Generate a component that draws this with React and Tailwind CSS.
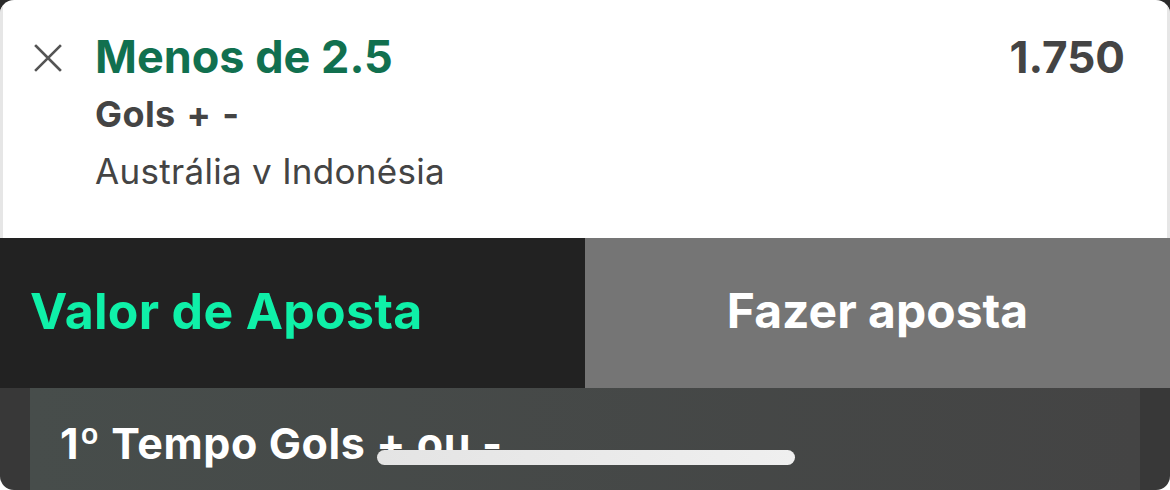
export default function App() {
  return (
    <div className="h-[490px] w-[1170px] overflow-hidden bg-[linear-gradient(to_bottom,#2a2a2a_50%,#ffffff_50%)] font-['Inter','Liberation_Sans',sans-serif]">
      <div className="flex h-full flex-col overflow-hidden rounded-[14px]">
        {/* selection */}
        <div className="flex h-[238px] shrink-0 items-start border-x-[3px] border-[#e6e6e6] bg-white pl-[31px] pr-[42px] pt-[32px]">
          <button className="mt-[12px] flex h-[28px] w-[28px] shrink-0 items-center justify-center text-[#555]">
            <svg viewBox="0 0 28 28" className="h-[28px] w-[28px]" fill="none" stroke="currentColor" strokeWidth="2.6" strokeLinecap="square">
              <path d="M2 2 L26 26 M26 2 L2 26" />
            </svg>
          </button>
          <div className="ml-[33px] flex flex-1 flex-col">
            <div className="text-[45px] font-bold leading-[50px] text-[#11704f]">Menos de 2.5</div>
            <div className="mt-[12px] text-[36px] font-bold leading-[40px] tracking-[0.4px] text-[#444] [word-spacing:2px]">Gols + -</div>
            <div className="mt-[17px] text-[35px] leading-[40px] tracking-[0.3px] text-[#444]">Austrália v Indonésia</div>
          </div>
          <div className="text-[44px] font-bold leading-[50px] text-[#444]">1.750</div>
        </div>

        {/* actions */}
        <div className="flex h-[150px] shrink-0">
          <button className="flex w-[585px] items-center bg-[#222] pb-[4px] pl-[30px] text-[50px] font-bold tracking-[0.3px] text-[#0ff0a8]">
            Valor de Aposta
          </button>
          <button className="flex flex-1 items-center justify-center bg-[#757575] pb-[4px] text-[48px] font-bold text-white">
            Fazer aposta
          </button>
        </div>

        {/* next market */}
        <div className="relative flex flex-1 bg-[#383838] px-[30px]">
          <div className="flex-1 bg-[linear-gradient(to_right,#474d4b,#444)] pl-[30px] pt-[30px]">
            <div className="text-[43px] font-bold leading-[50px] tracking-[0.6px] text-white">1º Tempo Gols + ou -</div>
          </div>
          <div className="absolute left-[377px] top-[62px] h-[15px] w-[418px] rounded-full bg-[linear-gradient(to_right,#e4e4e4,#efefef)]" />
        </div>
      </div>
    </div>
  );
}
